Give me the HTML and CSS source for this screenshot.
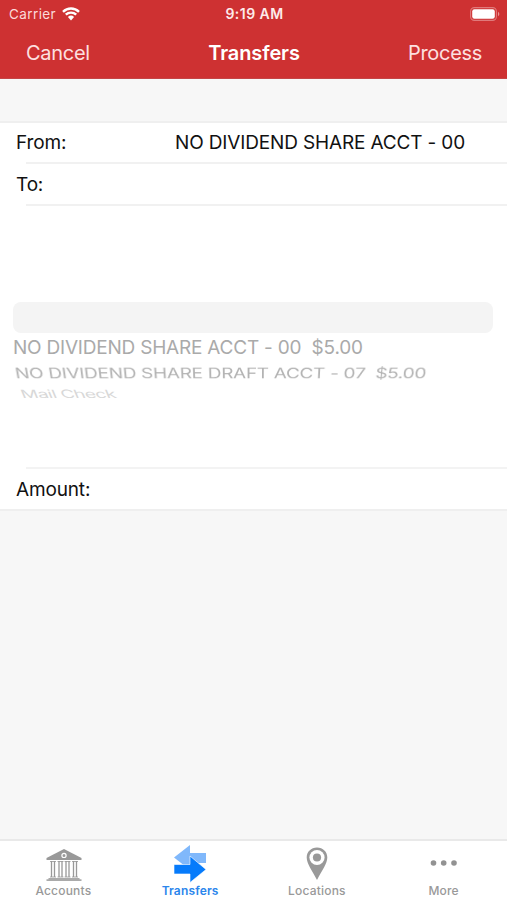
FILE: index.html
```html
<!DOCTYPE html>
<html lang="en">
<head>
    <meta charset="UTF-8">
    <meta name="viewport" content="width=device-width, initial-scale=1.0">
    <title>Transfers</title>
    <link rel="stylesheet" href="styles.css">
</head>
<body>
    <div class="app">
        <header class="header">
            <div class="status-bar">
                <div class="carrier">
                    <span>Carrier</span>
                    <svg class="wifi" viewBox="0 0 18 14" width="18" height="14">
                        <path d="M1 4.8a11.5 11.5 0 0 1 16 0M3.8 7.7a7.5 7.5 0 0 1 10.4 0" fill="none" stroke="#fff" stroke-width="2.4"/>
                        <path d="M5.9 10a4.5 4.5 0 0 1 6.2 0L9 13.4z" fill="#fff"/>
                    </svg>
                </div>
                <div class="time">9:19 AM</div>
                <svg class="battery" viewBox="0 0 30 14" width="30" height="14">
                    <rect x=".6" y=".6" width="25.8" height="12.8" rx="3.8" fill="none" stroke="#e07a7b" stroke-width="1.1"/>
                    <rect x="2.2" y="2.2" width="22.6" height="9.6" rx="2.2" fill="#fff"/>
                    <path d="M28 4.8c1.8.8 1.8 3.6 0 4.4z" fill="#e99596"/>
                </svg>
            </div>
            <nav class="nav-bar">
                <a class="nav-left">Cancel</a>
                <h1>Transfers</h1>
                <a class="nav-right">Process</a>
            </nav>
        </header>

        <main class="content">
            <div class="form">
                <div class="row">
                    <span class="label">From:</span>
                    <span class="value">NO DIVIDEND SHARE ACCT - 00</span>
                </div>
                <div class="row">
                    <span class="label">To:</span>
                </div>
                <div class="picker">
                    <div class="picker-selected"></div>
                    <div class="picker-item item-1"><span>NO DIVIDEND SHARE ACCT - 00&nbsp; $5.00</span></div>
                    <div class="picker-item item-2"><span>NO DIVIDEND SHARE DRAFT ACCT - 07&nbsp; $5.00</span></div>
                    <div class="picker-item item-3"><span>Mail Check</span></div>
                </div>
                <div class="row last">
                    <span class="label">Amount:</span>
                </div>
            </div>
        </main>

        <footer class="tab-bar">
            <div class="tab accounts">
                <svg viewBox="0 0 36 32" width="36" height="32">
                    <path d="M18 0L35.500 9V11H.5V9z" fill="#999"/>
                    <circle cx="18" cy="6.4" r="2.1" fill="#999" stroke="#fff" stroke-width="1.2"/>
                    <path d="M4 12.500h6M11.500 12.500h6M18.500 12.500h6M26 12.500h6M4 28h6M11.500 28h6M18.500 28h6M26 28h6" stroke="#aaa" stroke-width="1"/>
                    <path d="M5.500 12v16M8.500 12v16M13 12v16M16 12v16M20 12v16M23 12v16M27.500 12v16M30.500 12v16" stroke="#999" stroke-width="1.3"/>
                    <path d="M2.500 29h31v1.300h2V32H.5v-1.700h2z" fill="#aaa"/>
                </svg>
                <span>Accounts</span>
            </div>
            <div class="tab transfers active">
                <svg viewBox="0 0 34 38" width="34" height="38">
                    <path d="M1 12.500L17 0v8h16v10H17v7z" fill="#80b8fb"/>
                    <path d="M1 19.500h16V11l16 13.500L17 37.500V29H1z" fill="#067bfb" stroke="#fff" stroke-width=".6"/>
                </svg>
                <span>Transfers</span>
            </div>
            <div class="tab locations">
                <svg viewBox="0 0 22 34" width="22" height="34">
                    <path d="M11 .5C5 .5.7 4.900.7 10.500c0 6 5.300 13 10.300 22.500 5-9.500 10.300-16.500 10.300-22.500C21.300 4.900 17 .5 11 .5z" fill="#999"/>
                    <circle cx="11" cy="10.500" r="7.600" fill="#fff"/>
                    <circle cx="11" cy="10.500" r="4.100" fill="#999"/>
                </svg>
                <span>Locations</span>
            </div>
            <div class="tab more">
                <svg viewBox="0 0 28 6" width="28" height="6">
                    <circle cx="3.500" cy="3" r="2.800" fill="#929292"/>
                    <circle cx="13.700" cy="3" r="2.800" fill="#929292"/>
                    <circle cx="24" cy="3" r="2.800" fill="#929292"/>
                </svg>
                <span>More</span>
            </div>
        </footer>
    </div>
</body>
</html>
```
FILE: styles.css
```css
* {
    box-sizing: border-box;
}
body {
    margin: 0;
    font-family: Inter, "Liberation Sans", sans-serif;
    color: #111;
}
.app {
    height: 900px;
    display: flex;
    flex-direction: column;
    background-color: #f7f7f7;
    overflow: hidden;
}
.header {
    height: 79px;
    background-color: #ce3132;
    border-bottom: 1px solid #c54546;
    color: #fff;
}
.status-bar {
    display: grid;
    grid-template-columns: 1fr auto 1fr;
    align-items: center;
    height: 27px;
    padding: 0 7px 0 9px;
    font-size: 13.5px;
}
.carrier {
    display: flex;
    align-items: center;
    gap: 6px;
    color: #fbdada;
    letter-spacing: 0.4px;
}
.time {
    font-weight: 600;
    font-size: 14px;
    letter-spacing: 0.45px;
    color: #fdeaea;
}
.battery {
    justify-self: end;
}
.nav-bar {
    display: grid;
    grid-template-columns: 1fr auto 1fr;
    align-items: center;
    height: 52px;
    padding: 0 25px 0 26px;
    font-size: 20px;
    letter-spacing: -0.3px;
    color: #fde0e0;
}
.nav-bar h1 {
    margin: 0;
    font-size: 20px;
    font-weight: 600;
    letter-spacing: -0.1px;
    color: #fff;
}
.nav-right {
    text-align: right;
}
.content {
    flex: 1;
    padding-top: 42px;
}
.form {
    background-color: #fff;
    border-top: 2px solid #efefef;
    border-bottom: 2px solid #efefef;
}
.row {
    display: flex;
    justify-content: space-between;
    align-items: center;
    height: 41px;
    padding: 0 42px 2px 16px;
    font-size: 19px;
    letter-spacing: -0.15px;
    background: linear-gradient(#f1f1f1, #f1f1f1) 26px 100% / 100% 2px no-repeat;
}
.row + .row {
    height: 42px;
}
.row.last {
    height: 40px;
    padding-bottom: 0;
    background: none;
}
.picker {
    height: 263px;
    padding: 96px 14px 0 13px;
    color: #aaa;
    font-size: 19px;
    white-space: nowrap;
    overflow: hidden;
    background: linear-gradient(#f3f3f3, #f3f3f3) 26px 100% / 100% 2px no-repeat;
}
.picker-selected {
    height: 31px;
    border-radius: 8px;
    background-color: #f4f4f4;
}
.picker-item {
    height: 28px;
    line-height: 30px;
    letter-spacing: -0.21px;
}
.picker-item span {
    display: inline-block;
}
/* rows below the selection turn away like a wheel */
.item-2 {
    height: 24px;
    line-height: 26px;
    padding-left: 2px;
    letter-spacing: -0.3px;
    color: #b3b3b3;
    transform: perspective(1100px) rotateX(-40deg);
}
.item-3 {
    height: 13px;
    line-height: 19px;
    padding-left: 8px;
    letter-spacing: -0.55px;
    color: #d8d8d8;
    overflow: hidden;
}
.item-3 span {
    transform: scaleY(0.6) skewX(14deg);
}
.tab-bar {
    display: grid;
    grid-template-columns: repeat(4, 1fr);
    height: 61px;
    background-color: #fff;
    border-top: 2px solid #e9e9e9;
}
.tab {
    display: grid;
    grid-template-rows: 43px 13px;
    justify-items: center;
    align-items: start;
    line-height: 13px;
    font-size: 12px;
    font-weight: 500;
    letter-spacing: 0.2px;
    color: #999;
}
.tab.active {
    color: #2b86ec;
    font-weight: 600;
    letter-spacing: 0.15px;
}
.accounts svg {
    margin-top: 8px;
    margin-left: 1px;
}
.transfers svg {
    margin-top: 4px;
}
.locations svg {
    margin-top: 6px;
}
.more svg {
    margin-top: 19px;
}
```
